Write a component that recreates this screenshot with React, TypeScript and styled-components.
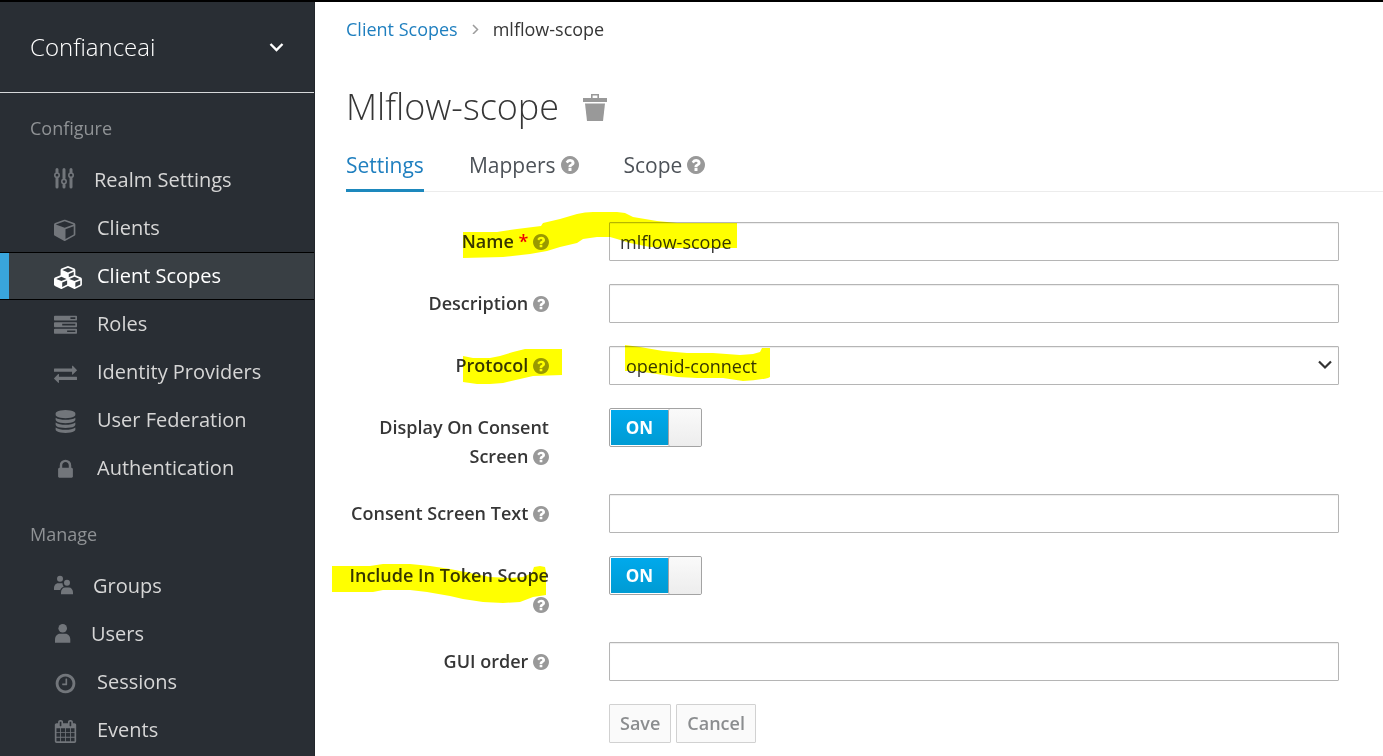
import React from 'react';
import styled, { createGlobalStyle, css } from 'styled-components';

const GlobalStyle = createGlobalStyle`
  *, *::before, *::after { box-sizing: border-box; }
  body {
    margin: 0;
    background: #fff;
    color: #363636;
    font-family: 'Open Sans', 'Liberation Sans', sans-serif;
    font-size: 18px;
  }
  button, input, select { font: inherit; color: inherit; }
`;

/* ---------- icons ---------- */

const FA = {
  cube: 'M896 1629l640-349v-636l-640 233v752zm-64-865l698-254-698-254-698 254zm832-252v768q0 35-18 65t-49 47l-704 384q-28 16-61 16t-61-16l-704-384q-31-17-49-47t-18-65v-768q0-40 23-73t61-47l704-256q22-8 44-8t44 8l704 256q38 14 61 47t23 73z',
  cubes: 'M640 1632l384-192v-314l-384 164v342zm-64-454l404-173-404-173-404 173zm1088 454l384-192v-314l-384 164v342zm-64-454l404-173-404-173-404 173zm-448-293l384-165v-266l-384 164v267zm-64-379l441-189-441-189-441 189zm1088 518v416q0 36-19 67t-52 47l-448 224q-25 14-57 14t-57-14l-448-224q-4-2-7-4-2 2-7 4l-448 224q-25 14-57 14t-57-14l-448-224q-33-16-52-47t-19-67v-416q0-38 21.5-70t56.5-48l434-186v-400q0-38 21.5-70t56.5-48l448-192q23-10 50-10t50 10l448 192q35 16 56.5 48t21.5 70v400l434 186q36 16 57 48t21 70z',
  tasks: 'M1024 1408h640v-128h-640v128zm-384-512h1024v-128h-1024v128zm640-512h384v-128h-384v128zm512 832v256q0 26-19 45t-45 19h-1664q-26 0-45-19t-19-45v-256q0-26 19-45t45-19h1664q26 0 45 19t19 45zm0-512v256q0 26-19 45t-45 19h-1664q-26 0-45-19t-19-45v-256q0-26 19-45t45-19h1664q26 0 45 19t19 45zm0-512v256q0 26-19 45t-45 19h-1664q-26 0-45-19t-19-45v-256q0-26 19-45t45-19h1664q26 0 45 19t19 45z',
  exchange: 'M1792 1184v192q0 13-9.5 22.5t-22.5 9.5h-1376v192q0 13-9.5 22.5t-22.5 9.5q-12 0-24-10l-319-320q-9-9-9-22 0-14 9-23l320-320q9-9 23-9 13 0 22.5 9.5t9.5 22.5v192h1376q13 0 22.5 9.5t9.5 22.5zm0-544q0 14-9 23l-320 320q-9 9-23 9-13 0-22.5-9.5t-9.5-22.5v-192h-1376q-13 0-22.5-9.5t-9.5-22.5v-192q0-13 9.5-22.5t22.5-9.5h1376v-192q0-14 9-23t23-9q12 0 24 10l319 319q9 9 9 23z',
  database: 'M896 768q237 0 443-43t325-127v170q0 69-103 128t-280 93.5-385 34.5-385-34.5-280-93.5-103-128v-170q119 84 325 127t443 43zm0 768q237 0 443-43t325-127v170q0 69-103 128t-280 93.5-385 34.5-385-34.5-280-93.5-103-128v-170q119 84 325 127t443 43zm0-384q237 0 443-43t325-127v170q0 69-103 128t-280 93.5-385 34.5-385-34.5-280-93.5-103-128v-170q119 84 325 127t443 43zm0-1152q208 0 385 34.5t280 93.5 103 128v128q0 69-103 128t-280 93.5-385 34.5-385-34.5-280-93.5-103-128v-128q0-69 103-128t280-93.5 385-34.5z',
  lock: 'M640 768h512v-192q0-106-75-181t-181-75-181 75-75 181v192zm832 96v576q0 40-28 68t-68 28h-960q-40 0-68-28t-28-68v-576q0-40 28-68t68-28h32v-192q0-184 132-316t316-132 316 132 132 316v192h32q40 0 68 28t28 68z',
  clock: 'M1024 544v448q0 14-9 23t-23 9h-320q-14 0-23-9t-9-23v-64q0-14 9-23t23-9h224v-352q0-14 9-23t23-9h64q14 0 23 9t9 23zm416 352q0-148-73-273t-198-198-273-73-273 73-198 198-73 273 73 273 198 198 273 73 273-73 198-198 73-273zm224 0q0 209-103 385.5t-279.5 279.5-385.5 103-385.5-103-279.5-279.5-103-385.5 103-385.5 279.5-279.5 385.5-103 385.5 103 279.5 279.5 103 385.5z',
  calendar: 'M192 1664h288v-288h-288v288zm352 0h320v-288h-320v288zm-352-352h288v-320h-288v320zm352 0h320v-320h-320v320zm-352-384h288v-288h-288v288zm736 736h320v-288h-320v288zm-384-736h320v-288h-320v288zm768 736h288v-288h-288v288zm-384-352h320v-320h-320v320zm-352-864v-288q0-13-9.5-22.5t-22.5-9.5h-64q-13 0-22.5 9.5t-9.5 22.5v288q0 13 9.5 22.5t22.5 9.5h64q13 0 22.5-9.5t9.5-22.5zm736 864h288v-320h-288v320zm-384-384h320v-288h-320v288zm384 0h288v-288h-288v288zm32-480v-288q0-13-9.5-22.5t-22.5-9.5h-64q-13 0-22.5 9.5t-9.5 22.5v288q0 13 9.5 22.5t22.5 9.5h64q13 0 22.5-9.5t9.5-22.5zm384-64v1280q0 52-38 90t-90 38h-1408q-52 0-90-38t-38-90v-1280q0-52 38-90t90-38h128v-96q0-66 47-113t113-47h64q66 0 113 47t47 113v96h384v-96q0-66 47-113t113-47h64q66 0 113 47t47 113v96h128q52 0 90 38t38 90z',
  help: 'M1024 1376v-192q0-14-9-23t-23-9h-192q-14 0-23 9t-9 23v192q0 14 9 23t23 9h192q14 0 23-9t9-23zm256-672q0-88-55.5-163t-138.5-116-170-41q-243 0-371 213-15 24 8 42l132 100q7 6 19 6 16 0 25-12 53-68 86-92 34-24 86-24 48 0 85.5 26t37.5 59q0 38-20 61t-68 45q-63 28-115.5 86.5t-52.5 125.5v36q0 14 9 23t23 9h192q14 0 23-9t9-23q0-19 21.5-49.5t54.5-49.5q32-18 49-28.5t46-35 44.5-48 28-60.5 12.5-81zm384 192q0 209-103 385.5t-279.5 279.5-385.5 103-385.5-103-279.5-279.5-103-385.5 103-385.5 279.5-279.5 385.5-103 385.5 103 279.5 279.5 103 385.5z',
};

const Glyph = ({ d }: { d: string }) => <path d={d} transform="translate(0 4) scale(0.01283)" />;

const SlidersGlyph = () => (
  <g>
    <path
      d="M3 3.500V6M3 12.500V21M10 3.500V12M10 19V21M17 3.500V6M17 12.500V21"
      fill="none"
      stroke="currentColor"
      strokeWidth="3"
      strokeLinecap="round"
    />
    <g fill="none" stroke="currentColor" strokeWidth="1.600">
      <circle cx="3" cy="9.200" r="2.200" />
      <circle cx="10" cy="15.600" r="2.200" />
      <circle cx="17" cy="9.200" r="2.200" />
    </g>
  </g>
);

const GroupsGlyph = () => (
  <g>
    <circle cx="6" cy="6.800" r="3" />
    <path d="M0 18v-1.500C0 13.500 1.800 11.300 4 11.300h4.500c0 1.600.6 2.500 1.300 3.200C8 15.300 6.500 16.500 6.200 18z" />
    <circle cx="13" cy="10.800" r="3" />
    <path d="M7 22.300v-1.800c0-3 1.800-5 4-5h4c2.200 0 4 2 4 5v1.800z" />
  </g>
);

const UserGlyph = () => (
  <g>
    <circle cx="8.700" cy="8.300" r="4.300" />
    <path d="M1 22.700v-3c0-3.500 2.200-6 5-6h5.300c2.800 0 5 2.500 5 6v3z" />
  </g>
);

/* ---------- page ---------- */

const Page = styled.div`
  display: flex;
  min-height: 100vh;
  border-top: 2px solid #000;
`;

const Sidebar = styled.aside`
  flex: 0 0 315px;
  background: #292e34;
  border-right: 1px solid #22262b;
`;

const RealmButton = styled.button`
  display: flex;
  align-items: center;
  justify-content: space-between;
  width: 100%;
  height: 91px;
  padding: 0 30px 1px;
  border: 0;
  border-bottom: 1px solid #d6d8da;
  background: none;
  color: #fff;
  font-size: 24px;
  font-weight: 300;
`;

const NavHeading = styled.h2`
  margin: 0;
  padding: 23px 30px 16px;
  color: #8f9295;
  font-size: 18px;
  font-weight: 400;
  line-height: 24px;
`;

const NavList = styled.ul`
  margin: 0 0 7px;
  padding: 0;
  list-style: none;
`;

const NavLink = styled.a<{ $active?: boolean }>`
  display: flex;
  align-items: center;
  gap: 19px;
  height: 48px;
  padding-left: 54px;
  color: #d6d6d6;
  font-size: 20px;
  text-decoration: none;
  ${(p) =>
    p.$active &&
    css`
      background: #393f44;
      border: solid #000;
      border-width: 1px 0;
      box-shadow: inset 9px 0 #39a5dc;
      color: #fff;
    `}
`;

const NavText = styled.span`
  padding-bottom: 2px;
`;

const NavIcon = styled.svg<{ $active?: boolean }>`
  flex: none;
  overflow: visible;
  color: ${(p) => (p.$active ? '#fff' : '#72767b')};
  fill: currentColor;
`;

const Main = styled.main`
  flex: 1;
  min-width: 0;
`;

const Breadcrumb = styled.nav`
  display: flex;
  align-items: center;
  gap: 14px;
  padding: 14px 31px 0;
  line-height: 26px;
`;

const CrumbLink = styled.a`
  color: #1f7fbf;
  text-decoration: none;
`;

const TitleRow = styled.div`
  display: flex;
  align-items: center;
  gap: 24px;
  padding: 40px 31px 0;
`;

const Title = styled.h1`
  margin: 0;
  font-size: 36px;
  font-weight: 300;
  line-height: 50px;
`;

const IconButton = styled.button`
  display: flex;
  padding: 0;
  border: 0;
  background: none;
  color: #999;
`;

const Tabs = styled.nav`
  display: flex;
  gap: 45px;
  height: 60px;
  margin-left: 31px;
  border-bottom: 1px solid #ececec;
`;

const Tab = styled.a<{ $active?: boolean }>`
  display: flex;
  align-items: center;
  gap: 5px;
  height: 60px;
  padding-top: 9px;
  border-bottom: 3px solid ${(p) => (p.$active ? '#1d88bd' : 'transparent')};
  color: ${(p) => (p.$active ? '#1f7fbf' : '#4d5258')};
  font-size: 21px;
  text-decoration: none;
`;

const Form = styled.form`
  position: relative;
  display: grid;
  gap: 23px;
  padding: 30px 44px 12px 31px;
`;

const Row = styled.div`
  display: grid;
  grid-template-columns: 203px 1fr;
  column-gap: 60px;
  align-items: start;
`;

const FieldLabel = styled.label`
  padding-top: 5px;
  font-weight: 600;
  line-height: 29px;
  text-align: right;
`;

const Required = styled.span`
  color: #e00;
`;

const HelpSvg = styled.svg`
  display: inline-block;
  color: #999;
  fill: currentColor;
  vertical-align: -2px;
`;

const control = css`
  width: 100%;
  height: 39px;
  border: 1px solid #b5b5b5;
  border-radius: 1px;
  background: #fff;
  box-shadow: inset 0 1px 1px rgba(3, 3, 3, 0.075);
  outline: none;
`;

const TextInput = styled.input`
  ${control}
  padding: 0 10px;
`;

const SelectWrap = styled.div`
  position: relative;
`;

const Select = styled.select`
  ${control}
  padding: 0 40px 0 16px;
  appearance: none;
`;

const SelectArrow = styled.svg`
  position: absolute;
  top: 14px;
  right: 7px;
  pointer-events: none;
`;

const Switch = styled.label`
  display: flex;
  width: 93px;
  height: 39px;
  border: 1px solid #a3a3a3;
  border-radius: 2px;
  background: #fff;
`;

const HiddenCheckbox = styled.input`
  position: absolute;
  width: 1px;
  height: 1px;
  margin: 0;
  opacity: 0;
`;

const SwitchOn = styled.span`
  flex: 1;
  margin: 1px 0 1px 1px;
  background: linear-gradient(#00a9ec, #009bd3);
  color: #fff;
  font-size: 17px;
  font-weight: 700;
  line-height: 35px;
  text-align: center;
`;

const SwitchHandle = styled.span`
  width: 33px;
  border-left: 1px solid #a3a3a3;
  border-radius: 2px;
  background: linear-gradient(#fafafa, #ededed);
`;

const Actions = styled.div`
  grid-column: 2;
  display: flex;
  gap: 5px;
`;

const ActionButton = styled.button`
  height: 39px;
  padding: 0 10px 2px;
  border: 1px solid #d1d1d1;
  border-radius: 1px;
  background: #fafafa;
  color: #8b8d8f;
  font-weight: 600;
`;

const Marker = styled.svg`
  position: absolute;
  top: 0;
  left: 0;
  overflow: visible;
  fill: #ff0;
  mix-blend-mode: multiply;
  pointer-events: none;
`;

type NavEntry = { label: string; icon: React.ReactNode; width: number; active?: boolean };

const configure: NavEntry[] = [
  { label: 'Realm Settings', icon: <SlidersGlyph />, width: 21 },
  { label: 'Clients', icon: <Glyph d={FA.cube} />, width: 24 },
  { label: 'Client Scopes', icon: <Glyph d={FA.cubes} />, width: 24, active: true },
  { label: 'Roles', icon: <Glyph d={FA.tasks} />, width: 24 },
  { label: 'Identity Providers', icon: <Glyph d={FA.exchange} />, width: 24 },
  { label: 'User Federation', icon: <Glyph d={FA.database} />, width: 24 },
  { label: 'Authentication', icon: <Glyph d={FA.lock} />, width: 24 },
];

const manage: NavEntry[] = [
  { label: 'Groups', icon: <GroupsGlyph />, width: 20 },
  { label: 'Users', icon: <UserGlyph />, width: 18 },
  { label: 'Sessions', icon: <Glyph d={FA.clock} />, width: 24 },
  { label: 'Events', icon: <Glyph d={FA.calendar} />, width: 24 },
];

const NavSection = ({ title, items }: { title: string; items: NavEntry[] }) => (
  <section>
    <NavHeading>{title}</NavHeading>
    <NavList>
      {items.map((item) => (
        <li key={item.label}>
          <NavLink href="#" $active={item.active}>
            <NavIcon width={item.width} height={28} $active={item.active} aria-hidden="true">
              {item.icon}
            </NavIcon>
            <NavText>{item.label}</NavText>
          </NavLink>
        </li>
      ))}
    </NavList>
  </section>
);

const Help = ({ size = 16 }: { size?: number }) => (
  <HelpSvg width={size} height={size} viewBox="128 128 1536 1536" aria-hidden="true">
    <path d={FA.help} />
  </HelpSvg>
);

type FieldProps = { id: string; label: string; required?: boolean; children: React.ReactNode };

const Field = ({ id, label, required, children }: FieldProps) => (
  <Row>
    <FieldLabel htmlFor={id}>
      {label} {required && <Required>* </Required>}
      <Help />
    </FieldLabel>
    {children}
  </Row>
);

const Toggle = ({ id }: { id: string }) => (
  <Switch>
    <HiddenCheckbox id={id} type="checkbox" defaultChecked />
    <SwitchOn>ON</SwitchOn>
    <SwitchHandle />
  </Switch>
);

export default function App() {
  return (
    <>
      <GlobalStyle />
      <Page>
        <Sidebar>
          <RealmButton type="button">
            Confianceai
            <svg width="15" height="10" aria-hidden="true">
              <path d="M1.500 2L7.500 8L13.500 2" fill="none" stroke="#fff" strokeWidth="2.400" />
            </svg>
          </RealmButton>
          <NavSection title="Configure" items={configure} />
          <NavSection title="Manage" items={manage} />
        </Sidebar>
        <Main>
          <Breadcrumb aria-label="Breadcrumb">
            <CrumbLink href="#">Client Scopes</CrumbLink>
            <svg width="7" height="10" aria-hidden="true">
              <path d="M1 1L5.500 5.500L1 10" fill="none" stroke="#9c9c9c" strokeWidth="1.500" />
            </svg>
            <span>mlflow-scope</span>
          </Breadcrumb>
          <TitleRow>
            <Title>Mlflow-scope</Title>
            <IconButton type="button" aria-label="Delete">
              <svg width="24" height="27" fill="currentColor">
                <path d="M8 0h8v4h8v4H0V4h8zM9.600 1.600V4h4.800V1.600z" fillRule="evenodd" />
                <path d="M2 9.500h20L20 27H4z" />
              </svg>
            </IconButton>
          </TitleRow>
          <Tabs>
            <Tab href="#" $active>
              Settings
            </Tab>
            <Tab href="#">
              Mappers <Help size={18} />
            </Tab>
            <Tab href="#">
              Scope <Help size={18} />
            </Tab>
          </Tabs>
          <Form onSubmit={(e) => e.preventDefault()}>
            <Field id="name" label="Name" required>
              <TextInput id="name" defaultValue="mlflow-scope" />
            </Field>
            <Field id="description" label="Description">
              <TextInput id="description" />
            </Field>
            <Field id="protocol" label="Protocol">
              <SelectWrap>
                <Select id="protocol" defaultValue="openid-connect">
                  <option>openid-connect</option>
                </Select>
                <SelectArrow width="14" height="10" aria-hidden="true">
                  <path d="M1 1.500L7 7.500L13 1.500" fill="none" stroke="#333" strokeWidth="2.200" />
                </SelectArrow>
              </SelectWrap>
            </Field>
            <Field id="display-consent" label="Display On Consent Screen">
              <Toggle id="display-consent" />
            </Field>
            <Field id="consent-text" label="Consent Screen Text">
              <TextInput id="consent-text" />
            </Field>
            <Field id="token-scope" label="Include In Token Scope">
              <Toggle id="token-scope" />
            </Field>
            <Field id="gui-order" label="GUI order">
              <TextInput id="gui-order" />
            </Field>
            <Row>
              <Actions>
                <ActionButton type="submit">Save</ActionButton>
                <ActionButton type="button">Cancel</ActionButton>
              </Actions>
            </Row>
            <Marker width="460" height="420" aria-hidden="true">
              <path d="M148 40L182 40L202 37L226 34L228 31L245 27L262 22Q270 20 278 20L302 20L310 21L318 25L342 29L362 31L422 31L422 56L362 56L335 55L315 51L302 47L295 45L282 45L268 47L262 51L245 55L232 59L215 62L188 65L148 66Z" />
              <path d="M148 164L158 166L175 166L185 164L198 160L210 157L247 157L247 183L218 184L205 187L188 191L175 192L162 192L148 190Z" />
              <path d="M310 153L325 155L348 159L372 161L398 161L425 163L438 162L445 160L447 156L455 156L455 185L453 186Q440 189 428 189L408 186L382 186L362 185L335 181L322 179L310 179Z" />
              <path d="M17 374L55 374L68 372L95 372L115 374L135 377L155 381L175 385L195 386L208 385L217 381L219 375L225 374L230 375L231 380L231 403L218 405L205 410L188 411L168 410L148 407L135 404L112 400L95 398L68 398L58 400L17 400Z" />
            </Marker>
          </Form>
        </Main>
      </Page>
    </>
  );
}
